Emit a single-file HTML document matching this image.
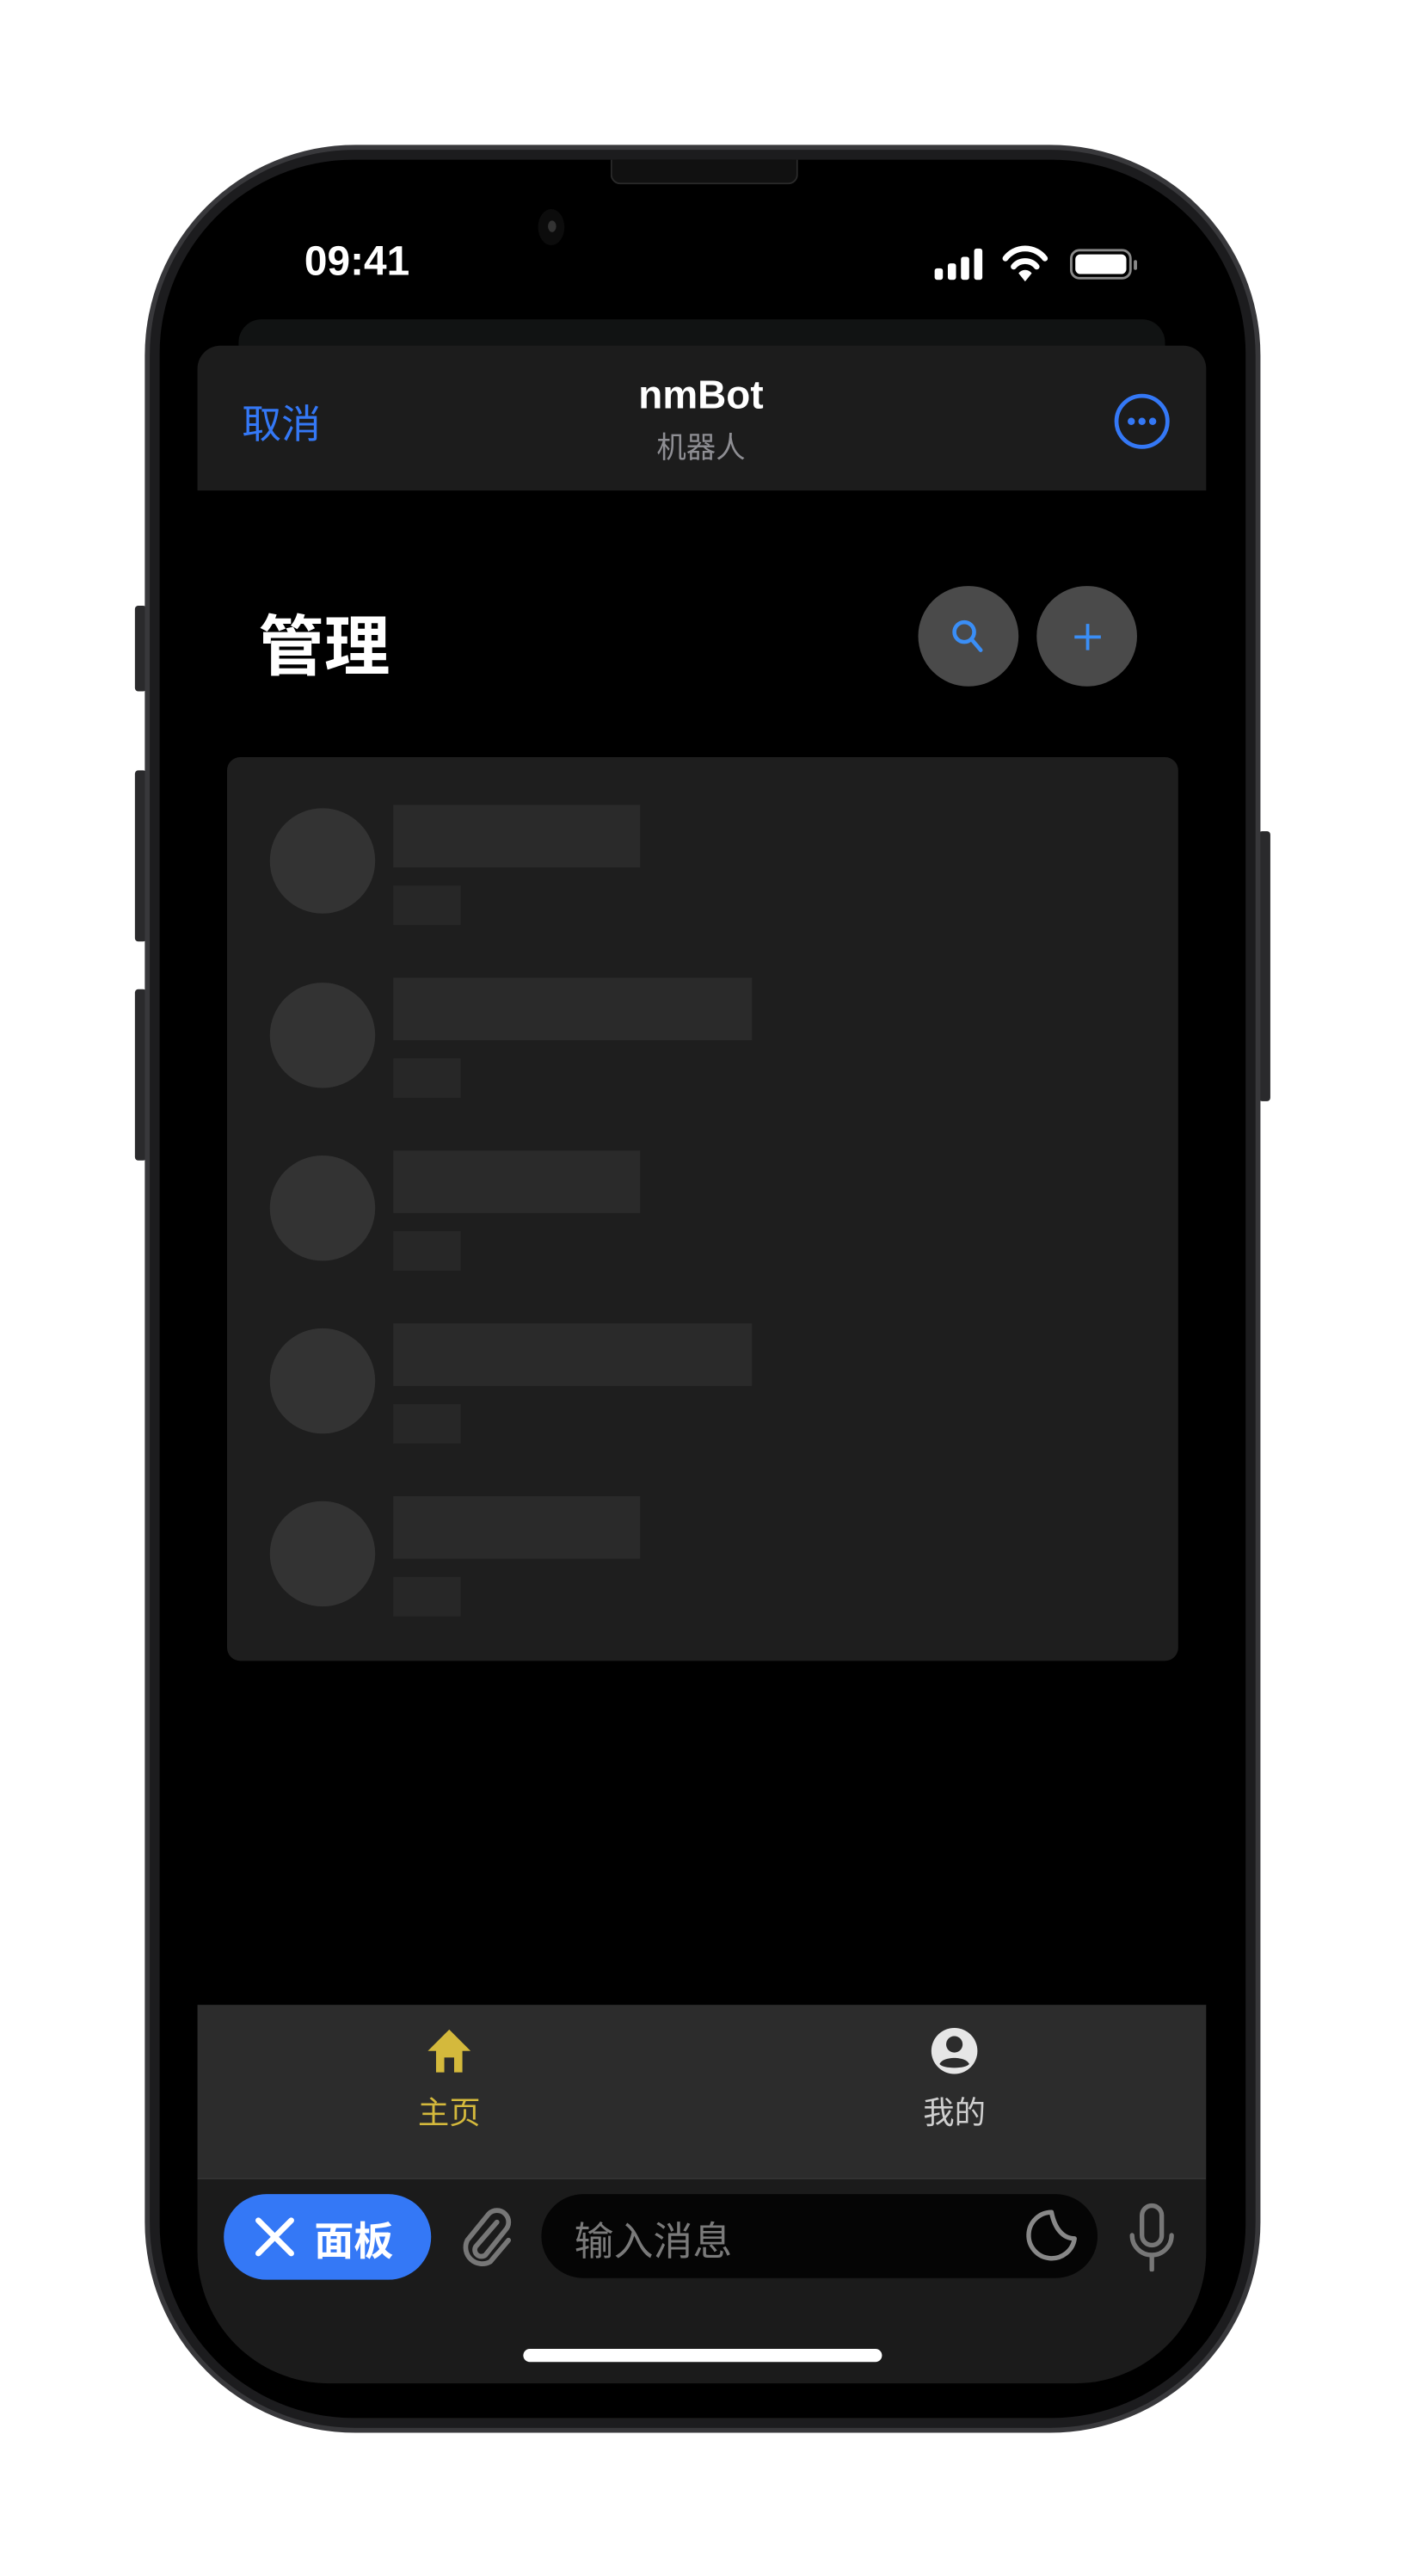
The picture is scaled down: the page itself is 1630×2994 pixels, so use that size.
<!DOCTYPE html>
<html><head><meta charset="utf-8"><style>
html,body{margin:0;padding:0;background:#fff;width:1630px;height:2993px;overflow:hidden}
#s{position:absolute;left:0;top:0;width:852px;height:1565px;transform:scale(1.9131);transform-origin:0 0;font-family:"Liberation Sans","Noto Sans CJK SC",sans-serif}
.a{position:absolute}
</style></head><body><div id="s">
<!-- side buttons -->
<div class="a" style="left:82px;top:368px;width:7px;height:52px;background:#2a2a2c;border-radius:2px"></div>
<div class="a" style="left:82px;top:468px;width:7px;height:104px;background:#2a2a2c;border-radius:2px"></div>
<div class="a" style="left:82px;top:601px;width:7px;height:104px;background:#2a2a2c;border-radius:2px"></div>
<div class="a" style="left:765px;top:505px;width:7px;height:164px;background:#2a2a2c;border-radius:2px"></div>
<!-- body -->
<div class="a" style="left:88px;top:88px;width:678px;height:1390px;border-radius:128px;background:#38383b"></div>
<div class="a" style="left:91px;top:91px;width:672px;height:1384px;border-radius:125px;background:#1c1c1e"></div>
<div class="a" style="left:97px;top:97px;width:660px;height:1372px;border-radius:118px;background:#000"></div>
<!-- speaker / camera -->
<div class="a" style="left:371px;top:97px;width:112px;height:14px;background:#111;border-radius:0 0 6px 6px;border:1px solid #2a2a2a;border-top:none"></div>
<div class="a" style="left:327px;top:127px;width:16px;height:22px;background:#0c0c0c;border-radius:50%"></div>
<div class="a" style="left:333px;top:134px;width:5px;height:7px;background:#333;border-radius:50%"></div>
<!-- status bar -->
<div class="a" style="left:185px;top:145px;color:#fff;font-size:25px;font-weight:bold">09:41</div>
<svg class="a" style="left:567px;top:148px" width="130" height="26" viewBox="0 0 130 26">
<rect x="1" y="15" width="5" height="7" rx="1.5" fill="#fff"/><rect x="9" y="12" width="5" height="10" rx="1.5" fill="#fff"/><rect x="17" y="8" width="5" height="14" rx="1.5" fill="#fff"/><rect x="25" y="3" width="5" height="19" rx="1.5" fill="#fff"/>
<path d="M44 9 A15 15 0 0 1 68 9" stroke="#fff" stroke-width="3.5" fill="none" stroke-linecap="round"/>
<path d="M49 14 A9 9 0 0 1 63 14" stroke="#fff" stroke-width="3.5" fill="none" stroke-linecap="round"/>
<path d="M52 18 L56 23 L60 18 A5 5 0 0 0 52 18Z" fill="#fff"/>
<rect x="84" y="4" width="36" height="17" rx="5" fill="none" stroke="#888" stroke-width="1.5"/>
<rect x="86.5" y="6.5" width="31" height="12" rx="3" fill="#fff"/>
<rect x="122" y="10" width="2" height="6" rx="1" fill="#888"/>
</svg>
<!-- sheet behind -->
<div class="a" style="left:145px;top:194px;width:563px;height:30px;background:#111313;border-radius:14px 14px 0 0"></div>
<!-- nav -->
<div class="a" style="left:120px;top:210px;width:613px;height:88px;background:#1c1c1c;border-radius:14px 14px 0 0"></div>
<div class="a" style="left:147px;top:238px;color:#3478f6;font-size:24px">取消</div>
<div class="a" style="left:326px;top:227px;width:200px;text-align:center;color:#fff;font-size:24px;font-weight:bold">nmBot</div>
<div class="a" style="left:326px;top:258px;width:200px;text-align:center;color:#8e8e93;font-size:18px">机器人</div>
<svg class="a" style="left:676px;top:238px" width="36" height="36" viewBox="0 0 36 36"><circle cx="18" cy="18" r="15.5" fill="none" stroke="#3478f6" stroke-width="2.5"/><circle cx="11.5" cy="18" r="2.2" fill="#3478f6"/><circle cx="18" cy="18" r="2.2" fill="#3478f6"/><circle cx="24.5" cy="18" r="2.2" fill="#3478f6"/></svg>
<!-- title -->
<div class="a" style="left:157px;top:361px;color:#fff;font-size:40px;font-weight:bold">管理</div>
<div class="a" style="left:558px;top:356px;width:61px;height:61px;border-radius:50%;background:#4a4a4a"></div>
<div class="a" style="left:630px;top:356px;width:61px;height:61px;border-radius:50%;background:#4a4a4a"></div>
<svg class="a" style="left:576px;top:374px" width="26" height="26" viewBox="0 0 26 26"><circle cx="10" cy="10" r="6" fill="none" stroke="#3a8ef6" stroke-width="2.4"/><path d="M14.5 14.5L20 21" stroke="#3a8ef6" stroke-width="2.4" stroke-linecap="round"/></svg>
<svg class="a" style="left:648px;top:374px" width="26" height="26" viewBox="0 0 26 26"><path d="M13 5V21M5 13H21" stroke="#3a8ef6" stroke-width="2"/></svg>
<!-- card -->
<div class="a" style="left:138px;top:460px;width:578px;height:549px;background:#1e1e1e;border-radius:8px"></div>
<div class="a" style="left:164px;top:491px;width:64px;height:64px;border-radius:50%;background:#333"></div>
<div class="a" style="left:239px;top:489px;width:150px;height:38px;background:#2a2a2a"></div>
<div class="a" style="left:239px;top:538px;width:41px;height:24px;background:#272727"></div>
<div class="a" style="left:164px;top:597px;width:64px;height:64px;border-radius:50%;background:#333"></div>
<div class="a" style="left:239px;top:594px;width:218px;height:38px;background:#2a2a2a"></div>
<div class="a" style="left:239px;top:643px;width:41px;height:24px;background:#272727"></div>
<div class="a" style="left:164px;top:702px;width:64px;height:64px;border-radius:50%;background:#333"></div>
<div class="a" style="left:239px;top:699px;width:150px;height:38px;background:#2a2a2a"></div>
<div class="a" style="left:239px;top:748px;width:41px;height:24px;background:#272727"></div>
<div class="a" style="left:164px;top:807px;width:64px;height:64px;border-radius:50%;background:#333"></div>
<div class="a" style="left:239px;top:804px;width:218px;height:38px;background:#2a2a2a"></div>
<div class="a" style="left:239px;top:853px;width:41px;height:24px;background:#272727"></div>
<div class="a" style="left:164px;top:912px;width:64px;height:64px;border-radius:50%;background:#333"></div>
<div class="a" style="left:239px;top:909px;width:150px;height:38px;background:#2a2a2a"></div>
<div class="a" style="left:239px;top:958px;width:41px;height:24px;background:#272727"></div>
<!-- tab bar -->
<div class="a" style="left:120px;top:1218px;width:613px;height:105px;background:#2c2c2c"></div>
<svg class="a" style="left:258px;top:1232px" width="30" height="28" viewBox="0 0 30 28"><path d="M15 1L28 14H23V27H18V18H12V27H7V14H2Z" fill="#d4b93c"/></svg>
<div class="a" style="left:243px;top:1269px;width:60px;text-align:center;color:#d4b93c;font-size:19px">主页</div>
<svg class="a" style="left:565px;top:1231px" width="30" height="30" viewBox="0 0 30 30"><circle cx="15" cy="15" r="14" fill="#e6e6e6"/><circle cx="15" cy="11" r="5" fill="#2c2c2c"/><path d="M6 23C8 18 22 18 24 23C22 26 8 26 6 23Z" fill="#2c2c2c"/></svg>
<div class="a" style="left:550px;top:1269px;width:60px;text-align:center;color:#cfcfcf;font-size:19px">我的</div>
<!-- input area -->
<div class="a" style="left:120px;top:1323px;width:613px;height:124px;background:#1b1b1b;border-radius:0 0 80px 80px;border-top:1px solid #333"></div>
<div class="a" style="left:136px;top:1333px;width:126px;height:52px;background:#3478f6;border-radius:26px"></div>
<svg class="a" style="left:153px;top:1345px" width="28" height="28" viewBox="0 0 28 28"><path d="M4 4L24 24M24 4L4 24" stroke="#fff" stroke-width="3.5" stroke-linecap="round"/></svg>
<div class="a" style="left:191px;top:1342px;color:#fff;font-size:24px;font-weight:bold">面板</div>
<svg class="a" style="left:278px;top:1340px" width="36" height="38" viewBox="0 0 36 38"><path d="M24 10L11 25A4 4 0 0 0 17 30L29 15A7 7 0 0 0 19 5L6 21A10 10 0 0 0 20 34L31 21" fill="none" stroke="#777" stroke-width="3" stroke-linecap="round"/></svg>
<div class="a" style="left:329px;top:1333px;width:338px;height:51px;background:#050505;border-radius:26px"></div>
<div class="a" style="left:349px;top:1342px;color:#7a7a7a;font-size:24px">输入消息</div>
<svg class="a" style="left:622px;top:1341px" width="34" height="34" viewBox="0 0 34 34"><path d="M17 3A14 14 0 1 0 31 19C24 19 19 13 17 3Z" fill="none" stroke="#888" stroke-width="2.8" stroke-linejoin="round"/></svg>
<svg class="a" style="left:684px;top:1338px" width="32" height="42" viewBox="0 0 32 42"><rect x="10" y="2" width="12" height="24" rx="6" fill="none" stroke="#777" stroke-width="2.8"/><path d="M4 20A12 12 0 0 0 28 20M16 32V41" fill="none" stroke="#777" stroke-width="2.8" stroke-linecap="round"/></svg>
<div class="a" style="left:318px;top:1427px;width:218px;height:8px;background:#fff;border-radius:4px"></div>
</div></body></html>
